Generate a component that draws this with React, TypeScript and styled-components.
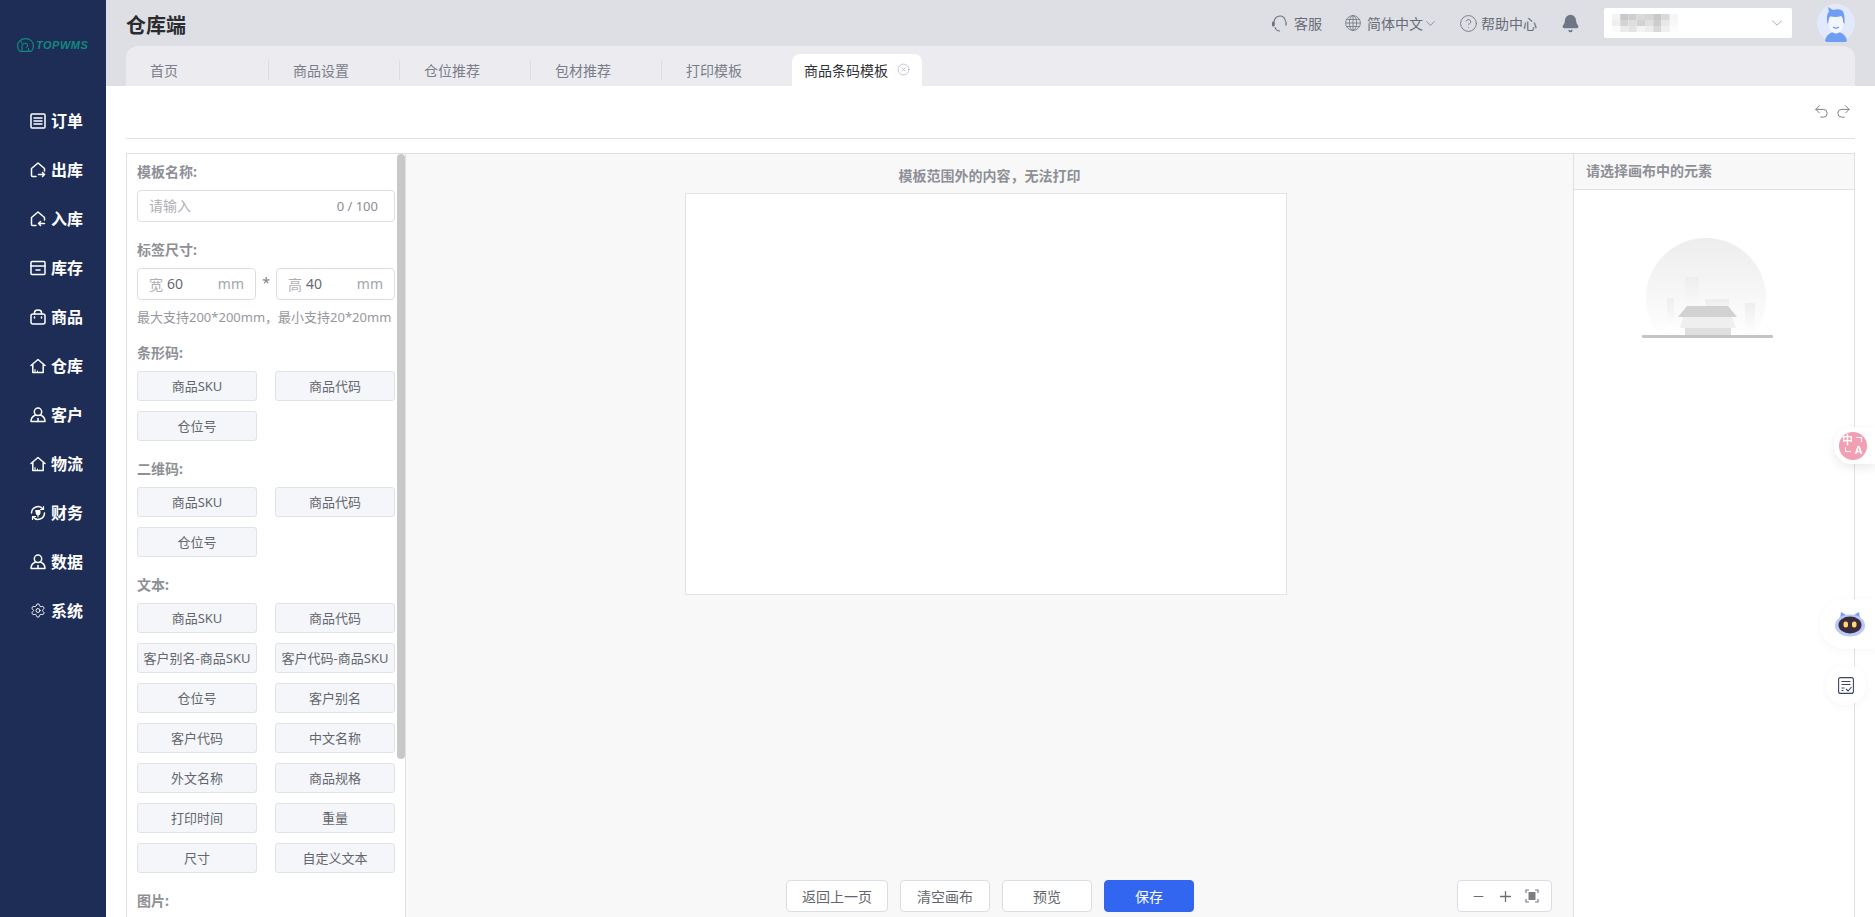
import { ReactNode } from "react";
import styled, { createGlobalStyle } from "styled-components";
import {
  Bell,
  ChevronDown,
  CircleHelp,
  CircleX,
  Minus,
  Plus,
  Redo2,
  Settings,
  Undo2,
} from "lucide-react";

const GlobalStyle = createGlobalStyle`
  * { box-sizing: border-box; }
  html, body { margin: 0; height: 100%; }
  body {
    font-family: "Noto Sans", "Noto Sans CJK SC", sans-serif;
    font-size: 14px;
    background: #fff;
    overflow: hidden;
  }
`;

function NavSvg({ children }: { children: ReactNode }) {
  return (
    <svg width="16" height="16" viewBox="0 0 16 16" fill="none" stroke="#fff" strokeWidth="1.5" strokeLinejoin="round" strokeLinecap="round">
      {children}
    </svg>
  );
}

const houseOpen = "M6 14.500H2.500a1 1 0 0 1-1-1V6.500L8 1l6.500 5.500V9";

const userIcon = (
  <NavSvg>
    <circle cx="8" cy="4.800" r="3.700" />
    <path d="M5.500 8C3 9 1 11 1 14.500h14C15 11 13 9 10.500 8" />
    <path d="M8 11.500v3" />
  </NavSvg>
);

const houseIcon = (
  <NavSvg>
    <path d="M1 7.500L8 1.500l7 6M2.800 6.500v8h10.400v-8" />
    <path d="M5 14.500v-3M7.500 14.500v-1.500" strokeWidth="1" />
  </NavSvg>
);

const navItems: { label: string; icon: ReactNode }[] = [
  {
    label: "订单",
    icon: (
      <NavSvg>
        <rect x="1" y="1" width="14" height="14" rx="1" />
        <path d="M4 5h8M4 8h8M4 11h8" />
      </NavSvg>
    ),
  },
  {
    label: "出库",
    icon: (
      <NavSvg>
        <path d={houseOpen} />
        <path d="M8.500 12.500h6M12.500 10.500l2 2-2 2" />
      </NavSvg>
    ),
  },
  {
    label: "入库",
    icon: (
      <NavSvg>
        <path d={houseOpen} />
        <path d="M14.500 12.500h-6M10.500 10.500l-2 2 2 2" />
      </NavSvg>
    ),
  },
  {
    label: "库存",
    icon: (
      <NavSvg>
        <rect x="1" y="1.500" width="14" height="13" rx="1" />
        <path d="M1 6h14M6 10h4" />
      </NavSvg>
    ),
  },
  {
    label: "商品",
    icon: (
      <NavSvg>
        <rect x="1" y="5" width="14" height="10" rx="2" />
        <path d="M4.500 5V3.500a3.500 2.500 0 0 1 7 0V5M4.500 8v1M11.500 8v1" />
      </NavSvg>
    ),
  },
  { label: "仓库", icon: houseIcon },
  { label: "客户", icon: userIcon },
  { label: "物流", icon: houseIcon },
  {
    label: "财务",
    icon: (
      <NavSvg>
        <path d="M1.500 8A6.500 6.500 0 0 1 13 4M14.500 8A6.500 6.500 0 0 1 3 12" />
        <path d="M13.500 1.500V4.500h-3M2.500 14.500v-3h3" strokeWidth="1.200" />
        <path d="M6 5.500h4V8a2 2 0 0 1-4 0zM8 10v2" fill="#fff" strokeWidth="1" />
      </NavSvg>
    ),
  },
  { label: "数据", icon: userIcon },
  { label: "系统", icon: <Settings size={19} color="#fff" strokeWidth={1.4} /> },
];

const tabs = [
  { label: "首页", width: 143 },
  { label: "商品设置", width: 131 },
  { label: "仓位推荐", width: 131 },
  { label: "包材推荐", width: 131 },
  { label: "打印模板", width: 130, last: true },
];

const sections = [
  { title: "条形码", items: ["商品SKU", "商品代码", "仓位号"] },
  { title: "二维码", items: ["商品SKU", "商品代码", "仓位号"] },
  {
    title: "文本",
    items: [
      "商品SKU",
      "商品代码",
      "客户别名-商品SKU",
      "客户代码-商品SKU",
      "仓位号",
      "客户别名",
      "客户代码",
      "中文名称",
      "外文名称",
      "商品规格",
      "打印时间",
      "重量",
      "尺寸",
      "自定义文本",
    ],
  },
  { title: "图片", items: [] as string[] },
];

const mosaic = [
  ["#f4f4f4", "#c9c9c9", "#cfcfcf", "#dadada", "#d6d6d6", "#c8c8c8", "#d9d9d9", "#f6f6f6"],
  ["#efefef", "#d4d4d4", "#dedede", "#d2d2d2", "#e0e0e0", "#cdcdcd", "#e8e8e8", "#f8f8f8"],
  ["#fafafa", "#ebebeb", "#e3e3e3", "#f3f3f3", "#ececec", "#d8d8d8", "#f0f0f0", "#fcfcfc"],
];

export default function App() {
  return (
    <>
      <GlobalStyle />
      <Shell>
        <Sidebar>
          <Logo>
            <svg width="17" height="14" viewBox="0 0 17 14" fill="none" stroke="#0f8a7c" strokeWidth="1.100">
              <path d="M3 13.400C1.400 12.200.6 10.200.6 7.600.6 3.600 3.800.6 8.500.6s7.900 3 7.900 7c0 2.600-.8 4.600-2.400 5.800z" />
              <path d="M5 13V8.600c0-2 1.200-3.400 3-3.400 1.400 0 2.600 1 2.600 2.400 0 1-.7 1.700-1.600 1.700M5 5.400C4 4.600 3.600 3.500 4.200 2.200M11.500 13v-3" />
            </svg>
            <LogoText>TOPWMS</LogoText>
          </Logo>
          <Nav>
            {navItems.map((item) => (
              <NavItem key={item.label}>
                <NavIcon>{item.icon}</NavIcon>
                <span>{item.label}</span>
              </NavItem>
            ))}
          </Nav>
        </Sidebar>

        <Main>
          <Header>
            <Title>仓库端</Title>
            <HeaderActions>
              <HeaderLink $pull={2}>
                <svg width="17" height="17" viewBox="0 0 17 17" fill="none" stroke="#6f7380" strokeWidth="1.100">
                  <path d="M3 10.500V7.500C3 4 5.500 1 9 1s5 2.500 5.500 5.500M4 12c.5 2.500 2.500 4 5 4" />
                  <rect x="1" y="6.500" width="2.500" height="5" rx="1.200" fill="#6f7380" stroke="none" />
                  <path d="M15 6.500v4" strokeWidth="1.300" />
                </svg>
                客服
              </HeaderLink>
              <HeaderLink $pull={4}>
                <svg width="16" height="16" viewBox="0 0 16 16" fill="none" stroke="#6f7380" strokeWidth="0.800">
                  <circle cx="8" cy="8" r="7.400" />
                  <ellipse cx="8" cy="8" rx="3.600" ry="7.400" />
                  <path d="M8 .6v14.800M.6 8h14.800M1.600 4.500h12.800M1.600 11.500h12.800" />
                </svg>
                <LangLabel>
                  简体中文
                  <ChevronDown size={15} strokeWidth={1.100} color="#6f7380" />
                </LangLabel>
              </HeaderLink>
              <HeaderLink $gap={3}>
                <CircleHelp size={19} strokeWidth={1.100} color="#6f7380" />
                帮助中心
              </HeaderLink>
              <BellButton>
                <Bell size={19} fill="#6f7787" color="#6f7787" />
              </BellButton>
              <AccountSelect>
                <svg width="66" height="18" viewBox="0 0 66 18">
                  {mosaic.map((row, r) =>
                    row.map((c, i) => <rect key={`${r}-${i}`} x={i * 8.25} y={r * 6} width="8.250" height="6" fill={c} />)
                  )}
                </svg>
                <ChevronDown size={18} strokeWidth={1} color="#8f9198" />
              </AccountSelect>
              <svg width="38" height="38" viewBox="0 0 38 38">
                <circle cx="19" cy="19" r="19" fill="#e1e9fb" />
                <path d="M8 37c1-6 5-8 8-9h6c3 1 7 3 8 9a19 19 0 0 1-22 0z" fill="#6f9cf5" />
                <ellipse cx="19" cy="19" rx="7.500" ry="10.500" fill="#f3f6fe" />
                <path d="M10.500 20C9.500 13 10 9 12 8L11 3l5 3c3-1 6-1 8 0 3 1 4 6 3.500 14l-1.500-2c.2-3-.5-5-2-6-3.500 1.500-7 1-11 .5-1 1-1.300 3-1.500 5.500z" fill="#6f9cf5" />
                <path d="M16 23c2 1.500 4 1.500 6 0" stroke="#6f9cf5" strokeWidth="1.200" fill="none" />
              </svg>
            </HeaderActions>
          </Header>

          <TabStrip>
            <TabBar>
              {tabs.map((t) => (
                <Tab key={t.label} $width={t.width} $last={t.last}>
                  {t.label}
                </Tab>
              ))}
              <ActiveTab>
                商品条码模板
                <CircleX size={13} strokeWidth={1.100} color="#9ea2ae" />
              </ActiveTab>
            </TabBar>
          </TabStrip>

          <Workspace>
            <Toolbar>
              <Undo2 size={17} strokeWidth={1.400} color="#7f8187" />
              <Redo2 size={17} strokeWidth={1.400} color="#7f8187" />
            </Toolbar>
            <Editor>
              <LeftPanel>
                <LeftInner>
                  <FieldLabel>模板名称:</FieldLabel>
                  <Field>
                    <FieldInput placeholder="请输入" />
                    <Counter>0 / 100</Counter>
                  </Field>
                  <FieldLabel $top={18}>标签尺寸:</FieldLabel>
                  <SizeRow>
                    <Field>
                      <Prefix>宽</Prefix>
                      <FieldInput defaultValue="60" />
                      <Suffix>mm</Suffix>
                    </Field>
                    <Times>*</Times>
                    <Field>
                      <Prefix>高</Prefix>
                      <FieldInput defaultValue="40" />
                      <Suffix>mm</Suffix>
                    </Field>
                  </SizeRow>
                  <Help>{"最大支持200*200mm\uFF0C最小支持20*20mm"}</Help>
                  {sections.map((s) => (
                    <Section key={s.title}>
                      <FieldLabel>{s.title}:</FieldLabel>
                      <ChipGrid>
                        {s.items.map((label, i) => (
                          <Chip key={i}>{label}</Chip>
                        ))}
                      </ChipGrid>
                    </Section>
                  ))}
                </LeftInner>
                <ScrollThumb />
              </LeftPanel>

              <Center>
                <Hint>{"模板范围外的内容\uFF0C无法打印"}</Hint>
                <Canvas />
                <Footer>
                  <ActionButton $width={102}>返回上一页</ActionButton>
                  <ActionButton>清空画布</ActionButton>
                  <ActionButton>预览</ActionButton>
                  <ActionButton $primary>保存</ActionButton>
                  <ZoomBox>
                    <Minus size={15} strokeWidth={1.800} color="#6b6d72" />
                    <Plus size={17} strokeWidth={1.800} color="#6b6d72" />
                    <svg width="14" height="14" viewBox="0 0 14 14" fill="none" stroke="#7c7e84" strokeWidth="1.200">
                      <path d="M1 4V1h3M10 1h3v3M13 10v3h-3M4 13H1v-3" />
                      <rect x="3.500" y="3" width="7" height="8" fill="#7c7e84" stroke="none" />
                    </svg>
                  </ZoomBox>
                </Footer>
              </Center>

              <RightPanel>
                <RightHeader>请选择画布中的元素</RightHeader>
                <EmptyArt width="140" height="105" viewBox="0 0 140 105">
                  <defs>
                    <linearGradient id="sky" x1="0" y1="0" x2="0" y2="1">
                      <stop offset="0" stopColor="#ededed" />
                      <stop offset="0.850" stopColor="#ffffff" />
                    </linearGradient>
                    <linearGradient id="tower" x1="0" y1="0" x2="0" y2="1">
                      <stop offset="0" stopColor="#eeeeee" />
                      <stop offset="1" stopColor="#ffffff" />
                    </linearGradient>
                  </defs>
                  <circle cx="66" cy="62" r="60" fill="url(#sky)" />
                  <rect x="45" y="41" width="14" height="45" fill="url(#tower)" />
                  <rect x="27" y="62" width="7" height="32" fill="url(#tower)" />
                  <rect x="65" y="63" width="24" height="30" fill="url(#tower)" />
                  <rect x="105" y="67" width="10" height="32" fill="url(#tower)" />
                  <polygon points="47,70 88,70 97,81 38,81" fill="#d2d2d2" />
                  <polygon points="43,81 92,81 96,92 40,92" fill="#efefef" />
                  <rect x="45" y="92" width="46" height="8" fill="#dfdfdf" />
                  <rect x="2" y="99" width="131" height="3" rx="1" fill="#c4c4c4" />
                </EmptyArt>
              </RightPanel>
            </Editor>
          </Workspace>
        </Main>
      </Shell>

      <TranslatePill>
        <PinkCircle>
          <span>中</span>
          <Bracket $corner="top" />
          <Bracket $corner="bottom" />
          <span>A</span>
        </PinkCircle>
      </TranslatePill>
      <RobotPill>
        <svg width="30" height="26" viewBox="0 0 30 26">
          <path d="M5 8L6 1l6 3.500zM25 8L24 1l-6 3.500z" fill="#7f9df5" />
          <ellipse cx="15" cy="14.500" rx="15" ry="11" fill="#b9c8fa" />
          <ellipse cx="15" cy="14" rx="11.500" ry="8.500" fill="#3a2c3c" />
          <rect x="8.500" y="10.500" width="4.500" height="6" rx="2" fill="#ffd671" />
          <rect x="17" y="10.500" width="4.500" height="6" rx="2" fill="#ffd671" />
        </svg>
      </RobotPill>
      <NoteCircle>
        <svg width="16" height="17" viewBox="0 0 16 17" fill="none" stroke="#3f4466" strokeWidth="1.100">
          <rect x="0.600" y="0.600" width="14.800" height="15.800" rx="2" />
          <path d="M3.500 4.500h9M3.500 7.500h9M3.500 11h3M3.500 13.500h2M8 12l2 2 3.500-4" />
        </svg>
      </NoteCircle>
    </>
  );
}

const Shell = styled.div`
  display: flex;
  height: 100vh;
  overflow: hidden;
`;

const Sidebar = styled.aside`
  width: 106px;
  flex-shrink: 0;
  background: #1e2d56;
`;

const Logo = styled.div`
  height: 89px;
  padding-left: 17px;
  display: flex;
  align-items: center;
  gap: 2px;
`;

const LogoText = styled.span`
  font-family: "Liberation Sans", sans-serif;
  font-size: 11px;
  font-weight: 700;
  font-style: italic;
  letter-spacing: 0.5px;
  color: #0f8a7c;
`;

const Nav = styled.nav`
  margin-top: 7px;
`;

const NavItem = styled.div`
  height: 49px;
  padding-left: 30px;
  display: flex;
  align-items: center;
  gap: 5px;
  color: #fff;
  font-size: 16px;
  font-weight: 700;

  span {
    padding-bottom: 2px;
  }
`;

const NavIcon = styled.div`
  width: 16px;
  height: 16px;
  display: flex;
  align-items: center;
  justify-content: center;
`;

const Main = styled.main`
  flex: 1;
  min-width: 0;
  display: flex;
  flex-direction: column;
`;

const Header = styled.header`
  height: 46px;
  flex-shrink: 0;
  padding: 0 20px;
  background: #dedfe4;
  display: flex;
  align-items: center;
  justify-content: space-between;
`;

const Title = styled.h1`
  margin: 2px 0 0;
  font-size: 20px;
  font-weight: 700;
  color: #2b2c30;
`;

const HeaderActions = styled.div`
  display: flex;
  align-items: center;
  gap: 25px;
`;

const HeaderLink = styled.div<{ $gap?: number; $pull?: number }>`
  display: flex;
  align-items: center;
  gap: ${({ $gap }) => $gap ?? 6}px;
  margin-right: ${({ $pull }) => -($pull ?? 0)}px;
  color: #686c78;
  font-size: 14px;
`;

const LangLabel = styled.span`
  display: flex;
  align-items: center;
`;

const BellButton = styled.div`
  display: flex;
  margin: 0 -1px;
`;

const AccountSelect = styled.div`
  width: 188px;
  height: 30px;
  padding: 0 6px 0 8px;
  background: #fff;
  border-radius: 2px;
  display: flex;
  align-items: center;
  justify-content: space-between;
`;

const TabStrip = styled.div`
  height: 40px;
  flex-shrink: 0;
  padding: 0 20px;
  background: #dedfe4;
`;

const TabBar = styled.div`
  height: 40px;
  background: #ebebf0;
  border-radius: 12px 12px 0 0;
  display: flex;
  align-items: flex-start;
`;

const Tab = styled.div<{ $width: number; $last?: boolean }>`
  width: ${({ $width }) => $width}px;
  height: 20px;
  margin-top: 14px;
  padding: 0 0 1px 24px;
  border-right: ${({ $last }) => ($last ? "none" : "1px solid #dcdde3")};
  display: flex;
  align-items: center;
  font-size: 14px;
  color: #7b7e8a;
`;

const ActiveTab = styled.div`
  width: 130px;
  height: 32px;
  margin-top: 8px;
  padding: 0 0 1px 12px;
  background: #fff;
  border-radius: 8px 8px 0 0;
  display: flex;
  align-items: center;
  gap: 9px;
  font-size: 14px;
  color: #2f3136;
`;

const Workspace = styled.div`
  flex: 1;
  min-height: 0;
  padding: 0 20px;
  background: #fff;
  display: flex;
  flex-direction: column;
`;

const Toolbar = styled.div`
  height: 53px;
  flex-shrink: 0;
  padding: 0 3px 1px 0;
  border-bottom: 1px solid #e0e1e7;
  display: flex;
  align-items: center;
  justify-content: flex-end;
  gap: 5px;
`;

const Editor = styled.div`
  flex: 1;
  min-height: 0;
  margin-top: 14px;
  border: 1px solid #dfe0e6;
  border-bottom: none;
  display: flex;
`;

const LeftPanel = styled.div`
  position: relative;
  width: 279px;
  flex-shrink: 0;
  border-right: 1px solid #dfe0e6;
  overflow: hidden;
`;

const ScrollThumb = styled.div`
  position: absolute;
  top: 0;
  right: 0;
  width: 8px;
  height: 605px;
  border-radius: 4px;
  background: #c8c8c8;
`;

const LeftInner = styled.div`
  padding: 8px 10px 10px;
`;

const FieldLabel = styled.div<{ $top?: number }>`
  height: 20px;
  margin: ${({ $top }) => $top ?? 0}px 0 8px;
  line-height: 19px;
  font-size: 14px;
  font-weight: 700;
  color: #8e9096;
`;

const Field = styled.div`
  flex: 1;
  min-width: 0;
  height: 32px;
  padding: 0 11px 1px;
  border: 1px solid #dcdee5;
  border-radius: 4px;
  background: #fff;
  display: flex;
  align-items: center;
`;

const FieldInput = styled.input`
  flex: 1;
  min-width: 0;
  border: none;
  outline: none;
  padding: 0;
  background: transparent;
  font: inherit;
  font-size: 14px;
  color: #676a70;

  &::placeholder {
    color: #adafb5;
  }
`;

const Counter = styled.span`
  margin-right: 5px;
  font-size: 13px;
  color: #8b8d93;
`;

const Prefix = styled.span`
  margin-right: 4px;
  color: #adafb5;
`;

const Suffix = styled.span`
  color: #a3a5ab;
`;

const SizeRow = styled.div`
  display: flex;
  align-items: center;
  gap: 6px;
`;

const Times = styled.span`
  width: 8px;
  padding-bottom: 3px;
  text-align: center;
  color: #7f8187;
`;

const Help = styled.div`
  height: 18px;
  margin: 8px 0 17px;
  line-height: 18px;
  font-size: 13px;
  color: #96989e;
  white-space: nowrap;
`;

const Section = styled.section`
  margin-bottom: 18px;
`;

const ChipGrid = styled.div`
  display: grid;
  grid-template-columns: 120px 120px;
  column-gap: 18px;
  row-gap: 10px;
`;

const Chip = styled.div`
  height: 30px;
  padding-bottom: 2px;
  border: 1px solid #e0e2e9;
  border-radius: 3px;
  background: #f5f6fa;
  display: flex;
  align-items: center;
  justify-content: center;
  font-size: 13px;
  color: #63666c;
  white-space: nowrap;
`;

const Center = styled.div`
  flex: 1;
  min-width: 0;
  background: #f8f8f8;
  display: flex;
  flex-direction: column;
  align-items: center;
`;

const Hint = styled.div`
  height: 39px;
  flex-shrink: 0;
  line-height: 43px;
  font-size: 14px;
  font-weight: 700;
  color: #8e9096;
`;

const Canvas = styled.div`
  width: 602px;
  height: 402px;
  flex-shrink: 0;
  margin-right: 7px;
  background: #fff;
  border: 1px solid #e3e4e9;
`;

const Footer = styled.div`
  align-self: stretch;
  margin-top: auto;
  padding: 0 21px 5px 380px;
  display: flex;
  gap: 12px;
`;

const ActionButton = styled.div<{ $width?: number; $primary?: boolean }>`
  width: ${({ $width }) => $width ?? 90}px;
  height: 32px;
  padding-bottom: 1px;
  border: 1px solid ${({ $primary }) => ($primary ? "#3366f0" : "#dcdee5")};
  border-radius: 4px;
  background: ${({ $primary }) => ($primary ? "#3366f0" : "#fff")};
  color: ${({ $primary }) => ($primary ? "#fff" : "#63666c")};
  display: flex;
  align-items: center;
  justify-content: center;
  font-size: 14px;
`;

const ZoomBox = styled.div`
  width: 95px;
  height: 32px;
  margin-left: auto;
  border: 1px solid #dcdee5;
  border-radius: 4px;
  background: #fff;
  display: flex;
  align-items: center;
  justify-content: center;
  gap: 11px;
`;

const RightPanel = styled.div`
  width: 281px;
  flex-shrink: 0;
  border-left: 1px solid #dfe0e6;
`;

const RightHeader = styled.div`
  height: 36px;
  padding: 0 0 3px 12px;
  background: #f8f8f8;
  border-bottom: 1px solid #dfe0e6;
  display: flex;
  align-items: center;
  font-size: 14px;
  font-weight: 700;
  color: #8e9096;
`;

const EmptyArt = styled.svg`
  display: block;
  margin: 46px 0 0 66px;
`;

const TranslatePill = styled.div`
  position: fixed;
  top: 427px;
  right: 0;
  width: 41px;
  height: 37px;
  padding-left: 5px;
  background: #fff;
  border-radius: 18px 0 0 18px;
  box-shadow: 0 4px 10px rgba(0, 0, 0, 0.08);
  display: flex;
  align-items: center;
`;

const PinkCircle = styled.div`
  width: 28px;
  height: 28px;
  padding: 3px 3px 5px;
  border-radius: 50%;
  background: #f29eb3;
  display: grid;
  grid-template-columns: 11px 11px;
  grid-template-rows: 10px 10px;
  place-items: center;
  color: #fff;
  font-size: 11px;
  font-weight: 700;
  line-height: 10px;
`;

const Bracket = styled.i<{ $corner: "top" | "bottom" }>`
  width: 6px;
  height: 5px;
  border: solid #fff;
  border-width: ${({ $corner }) => ($corner === "top" ? "1px 1px 0 0" : "0 0 1px 1px")};
`;

const RobotPill = styled.div`
  position: fixed;
  top: 599px;
  right: 0;
  width: 55px;
  height: 50px;
  padding-left: 15px;
  background: #fff;
  border-radius: 25px 0 0 25px;
  box-shadow: 0 2px 10px rgba(0, 0, 0, 0.04);
  display: flex;
  align-items: center;
`;

const NoteCircle = styled.div`
  position: fixed;
  top: 665px;
  right: 9px;
  width: 40px;
  height: 40px;
  border-radius: 50%;
  background: #fff;
  box-shadow: 0 2px 10px rgba(0, 0, 0, 0.04);
  display: flex;
  align-items: center;
  justify-content: center;
`;
